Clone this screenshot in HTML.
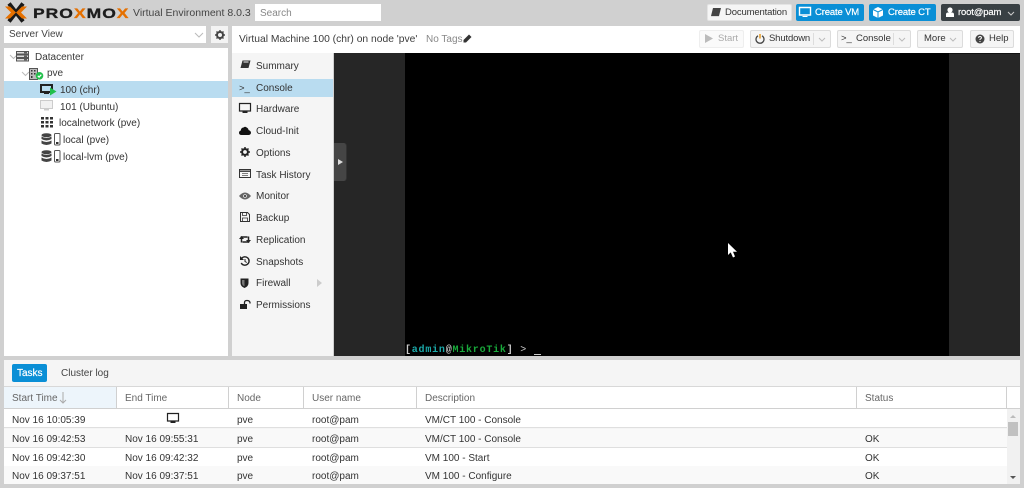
<!DOCTYPE html>
<html><head><meta charset="utf-8"><style>
*{box-sizing:border-box}
html,body{margin:0;padding:0}
body{width:1024px;height:488px;background:#d0d0d0;position:relative;overflow:hidden;font-family:"Liberation Sans",sans-serif;font-size:10px;color:#333}
.a{position:absolute}
.t{position:absolute;white-space:nowrap;line-height:12px;font-size:10px;color:#333;margin-top:1px}
.b{position:absolute;background:#f5f5f5;border:1px solid #dcdcdc;border-radius:2px}
.blue{position:absolute;background:#0a8fd6;border-radius:2px;color:#fff}
svg{position:absolute;overflow:visible}
.r{position:absolute;left:4px;width:1016px;height:19px;border-bottom:1px solid #dfdfdf}
.h{position:absolute;top:387px;height:22px;border-right:1px solid #d0d0d0;background:#fff;border-bottom:1px solid #d0d0d0}
.g{color:#666}
</style></head><body>

<!-- logo -->
<svg style="left:5px;top:3px" width="22" height="19" viewBox="0 0 22 19"><path d="M4 .500L18 18.500M18 .500L4 18.500" stroke="#1a1a1a" stroke-width="4" fill="none"/><path d="M0 3.500h5L11 9.500 5 15.500H0L6 9.500z" fill="#e57000"/><path d="M22 3.500h-5L11 9.500l6 6h5L16 9.500z" fill="#e57000"/></svg>
<div class="t" style="left:33px;top:4px;font-size:14px;line-height:17px;font-weight:bold;color:#1d1d1d;letter-spacing:.8px;transform:scaleX(1.25);transform-origin:left;-webkit-text-stroke:.3px #1d1d1d">PRO<span style="color:#e57000;-webkit-text-stroke-color:#e57000">X</span>MO<span style="color:#e57000;-webkit-text-stroke-color:#e57000">X</span></div>
<div class="t" style="left:133px;top:6px;font-size:10.500px;color:#444">Virtual Environment 8.0.3</div>
<div class="a" style="left:255px;top:4px;width:126px;height:17px;background:#fff"></div>
<div class="t g" style="left:260px;top:7px;color:#888">Search</div>

<!-- top right buttons -->
<div class="b" style="left:707px;top:4px;width:85px;height:17px;background:#f5f5f5;border-color:#e4e4e4"></div>
<svg style="left:710px;top:7px" width="12" height="11" viewBox="0 0 12 11"><path d="M3 1h8L9 9H1z" fill="#444"/><path d="M1 9.500h8" stroke="#ddd"/></svg>
<div class="t" style="left:725px;top:6px;font-size:9.500px;letter-spacing:-.15px">Documentation</div>
<div class="blue" style="left:796px;top:4px;width:68px;height:17px"></div>
<svg style="left:799px;top:7px" width="12" height="11" viewBox="0 0 12 11"><path d="M.500 .500h11v7.500h-11z" fill="none" stroke="#fff" stroke-width="1.400"/><path d="M3.500 10h5V9h-5z" fill="#fff"/></svg>
<div class="t" style="left:815px;top:6px;font-size:9.500px;letter-spacing:-.15px;color:#fff;-webkit-text-stroke:.2px #fff">Create VM</div>
<div class="blue" style="left:869px;top:4px;width:67px;height:17px"></div>
<svg style="left:872px;top:7px" width="12" height="11" viewBox="0 0 12 11"><path d="M6 0l5 2.500v6L6 11 1 8.500v-6z" fill="#fff"/><path d="M1 2.500L6 5l5-2.500M6 5v6" stroke="#0a8fd6" fill="none"/></svg>
<div class="t" style="left:888px;top:6px;font-size:9.500px;letter-spacing:-.15px;color:#fff;-webkit-text-stroke:.2px #fff">Create CT</div>
<div class="a" style="left:941px;top:4px;width:79px;height:17px;background:#394044;border-radius:2px"></div>
<svg style="left:945px;top:7px" width="10" height="11" viewBox="0 0 10 11"><circle cx="5" cy="3" r="2.600" fill="#fff"/><path d="M1 10V7.500Q1 5.500 3 5.500h4q2 0 2 2V10z" fill="#fff"/></svg>
<div class="t" style="left:958px;top:6px;font-size:9.500px;letter-spacing:-.15px;color:#fff;-webkit-text-stroke:.2px #fff">root@pam</div>
<svg style="left:1007px;top:11px" width="8" height="5"><path d="M1 1l3 3 3-3" fill="none" stroke="#ccc"/></svg>

<!-- server view -->
<div class="a" style="left:4px;top:26px;width:202px;height:17px;background:#fff"></div>
<div class="t" style="left:9px;top:28px;color:#444">Server View</div>
<svg style="left:194px;top:32px" width="10" height="6"><path d="M1 1l4 4 4-4" fill="none" stroke="#bbb"/></svg>
<div class="a" style="left:211px;top:26px;width:17px;height:17px;background:#f3f3f3"></div>
<svg style="left:215px;top:30px" width="10" height="10" viewBox="0 0 10 10"><circle cx="5" cy="5" r="3" fill="none" stroke="#444" stroke-width="2"/><path d="M5 0v2M5 8v2M0 5h2M8 5h2M1.500 1.500l1.200 1.200M7.300 7.300l1.200 1.200M1.500 8.500l1.200-1.200M7.300 2.700l1.200-1.200" stroke="#444" stroke-width="1.400"/></svg>

<!-- tree -->
<div class="a" style="left:4px;top:48px;width:224px;height:308px;background:#fff"></div>
<div class="a" style="left:4px;top:81px;width:224px;height:17px;background:#b9dcf0"></div>
<svg style="left:9px;top:54px" width="10" height="6"><path d="M1 1l3.500 3.500L8 1" fill="none" stroke="#bbb"/></svg>
<svg style="left:16px;top:51px" width="13" height="11" viewBox="0 0 13 11"><path d="M.500 .500h12v2.500H.500zM.500 4h12v2.500H.500zM.500 7.500h12V10H.500z" fill="#ddd" stroke="#555"/><path d="M8 1.700h3M8 5.200h3M8 8.700h3" stroke="#333"/></svg>
<div class="t" style="left:35px;top:51px;color:#3a3a3a">Datacenter</div>
<svg style="left:21px;top:71px" width="10" height="6"><path d="M1 1l3.500 3.500L8 1" fill="none" stroke="#bbb"/></svg>
<svg style="left:29px;top:68px" width="16" height="12" viewBox="0 0 16 12"><path d="M.500 .500h8v11h-8z" fill="#bbb" stroke="#555"/><path d="M2 2h1.500v1.500H2zM5 2h1.500v1.500H5zM2 5h1.500v1.500H2zM5 5h1.500v1.500H5zM2 8h1.500v2H2z" fill="#333"/><circle cx="10.500" cy="7.800" r="3.800" fill="#21bf4b"/><path d="M8.800 7.800l1.300 1.300 2.200-2.400" stroke="#fff" fill="none" stroke-width="1.200"/></svg>
<div class="t" style="left:47px;top:67px;color:#3a3a3a">pve</div>

<svg style="left:40px;top:84px" width="17" height="12" viewBox="0 0 17 12"><path d="M.500 .500h12v8h-12z" fill="#222" stroke="#222"/><path d="M2 2h9v5H2z" fill="#b9dcf0"/><path d="M4 10h5V9H4z" fill="#222"/><path d="M10 3.500l6.500 4-6.500 4z" fill="#21bf4b"/></svg>
<div class="t" style="left:60px;top:84px">100 (chr)</div>
<svg style="left:40px;top:100px" width="14" height="12" viewBox="0 0 14 12"><path d="M.500 .500h12v8h-12z" fill="#f1f1f1" stroke="#ccc"/><path d="M4 10.500h5V9H4z" fill="#ccc"/></svg>
<div class="t" style="left:60px;top:101px">101 (Ubuntu)</div>
<svg style="left:41px;top:117px" width="12" height="11"><path d="M0 0h3v2.500H0zM4.500 0h3v2.500h-3zM9 0h3v2.500H9zM0 4h3v2.500H0zM4.500 4h3v2.500h-3zM9 4h3v2.500H9zM0 8h3v2.500H0zM4.500 8h3v2.500h-3zM9 8h3v2.500H9z" fill="#333"/></svg>
<div class="t" style="left:59px;top:117px">localnetwork (pve)</div>
<svg style="left:41px;top:133px" width="20" height="13" viewBox="0 0 20 13"><ellipse cx="5.500" cy="2.200" rx="5" ry="2" fill="#444"/><path d="M.500 3.500Q5.500 6.500 10.500 3.500V6Q5.500 9 .500 6zM.500 7.500Q5.500 10.500 10.500 7.500V10.500Q5.500 13.500 .500 10.500z" fill="#444"/><rect x="13.500" y=".500" width="5.500" height="11.500" rx="1" fill="#fff" stroke="#555"/><path d="M15 9h2.500v2H15z" fill="#333"/></svg>
<div class="t" style="left:63px;top:134px">local (pve)</div>
<svg style="left:41px;top:150px" width="20" height="13" viewBox="0 0 20 13"><ellipse cx="5.500" cy="2.200" rx="5" ry="2" fill="#444"/><path d="M.500 3.500Q5.500 6.500 10.500 3.500V6Q5.500 9 .500 6zM.500 7.500Q5.500 10.500 10.500 7.500V10.500Q5.500 13.500 .500 10.500z" fill="#444"/><rect x="13.500" y=".500" width="5.500" height="11.500" rx="1" fill="#fff" stroke="#555"/><path d="M15 9h2.500v2H15z" fill="#333"/></svg>
<div class="t" style="left:63px;top:151px">local-lvm (pve)</div>

<!-- content toolbar -->
<div class="a" style="left:232px;top:26px;width:788px;height:27px;background:#fff"></div>
<div class="t" style="left:239px;top:33px;font-size:10.300px;color:#3c3c3c">Virtual Machine 100 (chr) on node 'pve'</div>
<div class="t" style="left:426px;top:33px;color:#888">No Tags</div>
<svg style="left:463px;top:34px" width="9" height="9" viewBox="0 0 9 9"><path d="M6 .500l2.500 2.500L3 8.500H.500V6z" fill="#333"/></svg>

<div class="b" style="left:699px;top:30px;width:45px;height:18px;border-color:#eee;background:#fafafa"></div>
<svg style="left:705px;top:34px" width="8" height="9"><path d="M0 0l8 4.500L0 9z" fill="#bbb"/></svg>
<div class="t" style="left:718px;top:32px;font-size:9.500px;color:#aaa">Start</div>

<div class="b" style="left:750px;top:30px;width:81px;height:18px"></div>
<svg style="left:755px;top:34px" width="10" height="10" viewBox="0 0 10 10"><path d="M3 1.800A4 4 0 1 0 7 1.800" fill="none" stroke="#444" stroke-width="1.300"/><path d="M5 0v4.500" stroke="#e08a00" stroke-width="1.300"/></svg>
<div class="t" style="left:769px;top:32px;font-size:9.500px;letter-spacing:-.15px">Shutdown</div>
<div class="a" style="left:813px;top:33px;width:1px;height:12px;background:#ddd"></div>
<svg style="left:818px;top:37px" width="8" height="5"><path d="M1 1l3 3 3-3" fill="none" stroke="#bbb"/></svg>

<div class="b" style="left:837px;top:30px;width:74px;height:18px"></div>
<div class="t" style="left:841px;top:32px;font-size:9.500px;color:#333">&gt;_</div>
<div class="t" style="left:856px;top:32px;font-size:9.500px">Console</div>
<div class="a" style="left:893px;top:33px;width:1px;height:12px;background:#ddd"></div>
<svg style="left:898px;top:37px" width="8" height="5"><path d="M1 1l3 3 3-3" fill="none" stroke="#bbb"/></svg>

<div class="b" style="left:917px;top:30px;width:46px;height:18px"></div>
<div class="t" style="left:924px;top:32px;font-size:9.500px">More</div>
<svg style="left:949px;top:37px" width="8" height="5"><path d="M1 1l3 3 3-3" fill="none" stroke="#bbb"/></svg>

<div class="b" style="left:970px;top:30px;width:44px;height:18px"></div>
<svg style="left:975px;top:34px" width="10" height="10" viewBox="0 0 10 10"><circle cx="5" cy="5" r="4.500" fill="#444"/><path d="M3.500 3.800Q3.700 2.500 5 2.500T6.500 3.800Q6.500 4.500 5 5.300V6" fill="none" stroke="#fff"/><path d="M4.500 7h1v1h-1z" fill="#fff"/></svg>
<div class="t" style="left:989px;top:32px;font-size:9.500px">Help</div>

<!-- left menu -->
<div class="a" style="left:232px;top:53px;width:101px;height:303px;background:#f5f5f5"></div>
<div class="a" style="left:232px;top:79px;width:101px;height:18px;background:#b9dcf0"></div>
<svg style="left:240px;top:60px" width="11" height="10" viewBox="0 0 11 10"><path d="M2.500 .500h8L8.500 8H.500z" fill="#333"/><path d="M3.500 2h5" stroke="#f5f5f5"/></svg>
<div class="t" style="left:256px;top:60px">Summary</div>
<div class="t" style="left:239px;top:82px;font-size:9.500px">&gt;_</div>
<div class="t" style="left:256px;top:82px">Console</div>
<svg style="left:239px;top:103px" width="12" height="11" viewBox="0 0 12 11"><path d="M.500 .500h11v7.500h-11z" fill="#f5f5f5" stroke="#222" stroke-width="1.200"/><path d="M3.500 10h5V8.500h-5z" fill="#222"/></svg>
<div class="t" style="left:256px;top:103px">Hardware</div>
<svg style="left:239px;top:126px" width="12" height="9" viewBox="0 0 12 9"><path d="M2.500 9Q0 9 0 6.800 0 5 1.800 4.500 2 1.800 4.500 1.500 6 0 7.700 1.500 9.500 2.500 9.500 4 12 4.800 12 7 11.500 9 9.500 9z" fill="#111"/></svg>
<div class="t" style="left:256px;top:125px">Cloud-Init</div>
<svg style="left:240px;top:147px" width="10" height="10" viewBox="0 0 10 10"><circle cx="5" cy="5" r="2.900" fill="none" stroke="#222" stroke-width="2"/><path d="M5 0v2M5 8v2M0 5h2M8 5h2M1.500 1.500l1.200 1.200M7.300 7.300l1.200 1.200M1.500 8.500l1.200-1.200M7.300 2.700l1.200-1.200" stroke="#222" stroke-width="1.500"/></svg>
<div class="t" style="left:256px;top:147px">Options</div>
<svg style="left:239px;top:169px" width="12" height="9" viewBox="0 0 12 9"><path d="M.500 .500h11v8h-11z" fill="none" stroke="#333"/><path d="M.500 2.200h11" stroke="#333" stroke-width="1.400"/><path d="M3 4.500h6M3 6.500h6" stroke="#555" stroke-width=".8"/></svg>
<div class="t" style="left:256px;top:169px">Task History</div>
<svg style="left:239px;top:192px" width="12" height="8" viewBox="0 0 12 8"><path d="M0 4Q6-3 12 4 6 11 0 4z" fill="#666"/><circle cx="6" cy="4" r="1.800" fill="#f5f5f5"/><circle cx="6" cy="4" r="1" fill="#222"/></svg>
<div class="t" style="left:256px;top:190px">Monitor</div>
<svg style="left:240px;top:212px" width="10" height="10" viewBox="0 0 10 10"><path d="M.500 .500h7l2 2v7h-9z" fill="#f5f5f5" stroke="#333"/><path d="M2.500 .500h4v3h-4zM2.500 6h5v3.500h-5z" fill="none" stroke="#333" stroke-width=".8"/></svg>
<div class="t" style="left:256px;top:212px">Backup</div>
<svg style="left:239px;top:235px" width="12" height="9" viewBox="0 0 12 9"><path d="M2.500 7.500V2h6M9.500 1.500v5.500h-6" fill="none" stroke="#222" stroke-width="1.500"/><path d="M0 4h5L2.500 1zM7 5h5L9.500 8z" fill="#222"/></svg>
<div class="t" style="left:256px;top:234px">Replication</div>
<svg style="left:240px;top:256px" width="10" height="10" viewBox="0 0 10 10"><path d="M1.500 2.500A4.200 4.200 0 1 1 1.200 7" fill="none" stroke="#222" stroke-width="1.400"/><path d="M0 0v4h4z" fill="#222"/><path d="M5 3v2.500l1.800 1" fill="none" stroke="#222"/></svg>
<div class="t" style="left:256px;top:256px">Snapshots</div>
<svg style="left:240px;top:278px" width="9" height="10" viewBox="0 0 9 10"><path d="M.500 .500h8V5Q8.500 8.500 4.500 10 .500 8.500 .500 5z" fill="#222"/><path d="M4.500 2v6.300Q2 7.300 2 5V2z" fill="#777"/></svg>
<div class="t" style="left:256px;top:277px">Firewall</div>
<svg style="left:317px;top:279px" width="5" height="8"><path d="M0 0l5 4-5 4z" fill="#ccc"/></svg>
<svg style="left:240px;top:300px" width="11" height="9" viewBox="0 0 11 9"><path d="M0 4h7v5H0z" fill="#222"/><path d="M4.500 4V2.500Q4.500 .500 7 .500T10 2.500V3.500" fill="none" stroke="#222" stroke-width="1.300"/></svg>
<div class="t" style="left:256px;top:299px">Permissions</div>

<!-- console -->
<div class="a" style="left:334px;top:53px;width:686px;height:303px;background:#262626"></div>
<div class="a" style="left:405px;top:53px;width:544px;height:303px;background:#000"></div>
<div class="a" style="left:949px;top:53px;width:71px;height:1px;background:#111"></div>
<div class="a" style="left:334px;top:143px;width:13px;height:38px;background:#454545;border-radius:0 3px 3px 0;border-right:1px solid #333"></div>
<svg style="left:338px;top:159px" width="5" height="6"><path d="M0 0l5 3-5 3z" fill="#ddd"/></svg>
<div class="t" style="left:405px;top:345px;font:bold 10px/12px 'Liberation Mono',monospace;color:#ccc;letter-spacing:.78px;margin-top:0">[<span style="color:#1ba8a8">admin</span><span style="color:#ccc">@</span><span style="color:#18a83a">MikroTik</span>] <span style="font-weight:normal">&gt;</span></div>
<div class="a" style="left:534px;top:354px;width:7px;height:1px;background:#ccc"></div>
<svg style="left:728px;top:243px" width="10" height="15" viewBox="0 0 10 15"><path d="M0 0v12l2.700-2.600L5 14.500l2-1L5 8.700h4z" fill="#fff"/></svg>

<!-- bottom -->
<div class="a" style="left:4px;top:360px;width:1016px;height:124px;background:#f5f5f5"></div>
<div class="blue" style="left:12px;top:364px;width:35px;height:18px"></div>
<div class="t" style="left:17px;top:367px;color:#fff;-webkit-text-stroke:.2px #fff">Tasks</div>
<div class="t" style="left:61px;top:367px;color:#444">Cluster log</div>

<div class="a" style="left:4px;top:386px;width:1016px;height:1px;background:#d8d8d8"></div>
<div class="h" style="left:4px;width:113px;background:#edf5fb"></div>
<div class="h" style="left:117px;width:112px"></div>
<div class="h" style="left:229px;width:75px"></div>
<div class="h" style="left:304px;width:113px"></div>
<div class="h" style="left:417px;width:440px"></div>
<div class="h" style="left:857px;width:150px"></div>
<div class="h" style="left:1007px;width:13px;border-right:0"></div>
<div class="t g" style="left:12px;top:392px">Start Time</div>
<svg style="left:59px;top:392px" width="8" height="12"><path d="M4 0v11M1 8l3 3 3-3" fill="none" stroke="#aaa"/></svg>
<div class="t g" style="left:125px;top:392px">End Time</div>
<div class="t g" style="left:237px;top:392px">Node</div>
<div class="t g" style="left:312px;top:392px">User name</div>
<div class="t g" style="left:425px;top:392px">Description</div>
<div class="t g" style="left:865px;top:392px">Status</div>

<div class="r" style="top:409px;background:#fff;width:1003px"></div>
<div class="r" style="top:429px;background:#f9f9f9;width:1003px"></div>
<div class="r" style="top:448px;background:#fff;width:1003px"></div>
<div class="r" style="top:466px;background:#f9f9f9;width:1003px;height:18px;border:0"></div>

<div class="t" style="left:12px;top:414px">Nov 16 10:05:39</div>
<svg style="left:167px;top:413px" width="12" height="11" viewBox="0 0 12 11"><path d="M.500 .500h11v7.500h-11z" fill="#fff" stroke="#222" stroke-width="1.200"/><path d="M3.500 10h5V8.500h-5z" fill="#222"/></svg>
<div class="t" style="left:237px;top:414px">pve</div>
<div class="t" style="left:312px;top:414px">root@pam</div>
<div class="t" style="left:425px;top:414px">VM/CT 100 - Console</div>

<div class="t" style="left:12px;top:433px">Nov 16 09:42:53</div>
<div class="t" style="left:125px;top:433px">Nov 16 09:55:31</div>
<div class="t" style="left:237px;top:433px">pve</div>
<div class="t" style="left:312px;top:433px">root@pam</div>
<div class="t" style="left:425px;top:433px">VM/CT 100 - Console</div>
<div class="t" style="left:865px;top:433px">OK</div>

<div class="t" style="left:12px;top:452px">Nov 16 09:42:30</div>
<div class="t" style="left:125px;top:452px">Nov 16 09:42:32</div>
<div class="t" style="left:237px;top:452px">pve</div>
<div class="t" style="left:312px;top:452px">root@pam</div>
<div class="t" style="left:425px;top:452px">VM 100 - Start</div>
<div class="t" style="left:865px;top:452px">OK</div>

<div class="t" style="left:12px;top:470px">Nov 16 09:37:51</div>
<div class="t" style="left:125px;top:470px">Nov 16 09:37:51</div>
<div class="t" style="left:237px;top:470px">pve</div>
<div class="t" style="left:312px;top:470px">root@pam</div>
<div class="t" style="left:425px;top:470px">VM 100 - Configure</div>
<div class="t" style="left:865px;top:470px">OK</div>

<!-- scrollbar -->
<div class="a" style="left:1007px;top:409px;width:13px;height:75px;background:#f1f1f1"></div>
<div class="a" style="left:1008px;top:422px;width:10px;height:14px;background:#c1c1c1"></div>
<svg style="left:1010px;top:415px" width="6" height="3"><path d="M3 0l3 3H0z" fill="#bbb"/></svg>
<svg style="left:1010px;top:476px" width="6" height="3"><path d="M0 0h6L3 3z" fill="#555"/></svg>

</body></html>
